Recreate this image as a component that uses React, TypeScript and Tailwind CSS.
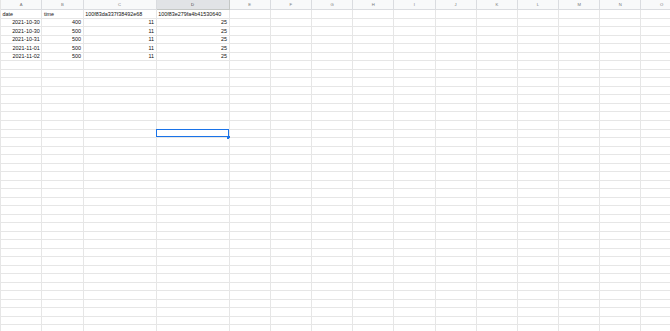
const COLS = ['A', 'B', 'C', 'D', 'E', 'F', 'G', 'H', 'I', 'J', 'K', 'L', 'M', 'N', 'O']

type Cell = { v: string; num?: boolean }

const DATA: Cell[][] = [
  [{ v: 'date' }, { v: 'time' }, { v: '100f83da337f38492e68' }, { v: '100f83e279fa4b41530640' }],
  [{ v: '2021-10-30', num: true }, { v: '400', num: true }, { v: '11', num: true }, { v: '25', num: true }],
  [{ v: '2021-10-30', num: true }, { v: '500', num: true }, { v: '11', num: true }, { v: '25', num: true }],
  [{ v: '2021-10-31', num: true }, { v: '500', num: true }, { v: '11', num: true }, { v: '25', num: true }],
  [{ v: '2021-11-01', num: true }, { v: '500', num: true }, { v: '11', num: true }, { v: '25', num: true }],
  [{ v: '2021-11-02', num: true }, { v: '500', num: true }, { v: '11', num: true }, { v: '25', num: true }],
]

const ROW_COUNT = 38
const SEL_ROW = 14
const SEL_COL = 3

export default function App() {
  const rows = Array.from({ length: ROW_COUNT }, (_, r) => r)

  return (
    <div
      className="w-[670px] h-[331px] overflow-hidden bg-white"
      style={{ fontFamily: '"Liberation Sans", Arial, sans-serif' }}
    >
      <div className="grid w-[700px] grid-cols-[41.3px_41.3px_73px_73px_repeat(11,41.2px)] border-l border-[#e6e6e6]">
        {/* column headers */}
        {COLS.map((c, i) => (
          <div
            key={c}
            className={
              i === SEL_COL
                ? 'h-[10.3px] flex items-center justify-center border-r border-b border-[#c4c7c5] bg-[#e1e3e6] text-[4.2px] leading-none text-[#3c4043]'
                : 'h-[10.3px] flex items-center justify-center border-r border-b border-[#dadce0] bg-[#f8f9fa] text-[4.2px] leading-none text-[#777]'
            }
          >
            {c}
          </div>
        ))}

        {/* cells */}
        {rows.map((r) =>
          COLS.map((c, ci) => {
            const cell = DATA[r]?.[ci]
            const selected = r === SEL_ROW && ci === SEL_COL
            return (
              <div
                key={`${c}${r}`}
                className={
                  'relative h-[8.53px] border-r border-b border-[#e6e6e6] flex items-end overflow-visible whitespace-nowrap px-[1.6px] pb-[0.6px] text-[5.4px] leading-none text-[#111] ' +
                  (cell?.num ? 'justify-end' : 'justify-start')
                }
              >
                {cell?.v}
                {selected && (
                  <>
                    <div className="absolute -top-px -left-px right-0 bottom-0 border-[1.5px] border-[#1a73e8]" />
                    <div className="absolute -right-[1.5px] -bottom-[1.5px] w-[3px] h-[3px] bg-[#1a73e8]" />
                  </>
                )}
              </div>
            )
          })
        )}
      </div>
    </div>
  )
}
